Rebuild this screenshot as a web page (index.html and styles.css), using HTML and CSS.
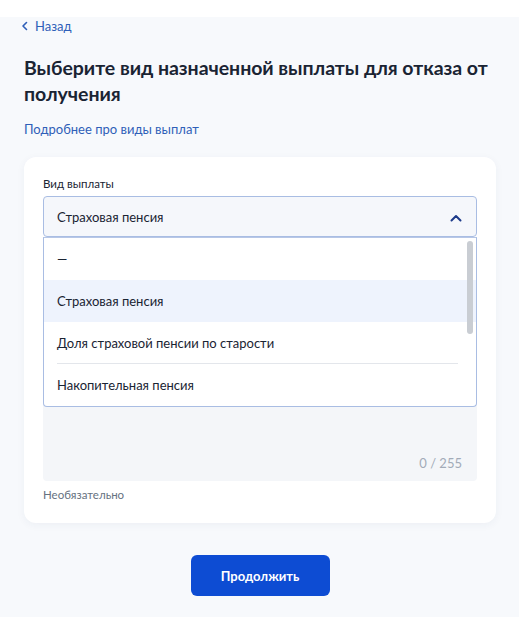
FILE: index.html
```html
<!DOCTYPE html>
<html lang="ru">
<head>
<meta charset="utf-8">
<title>Отказ от выплаты</title>
<link rel="stylesheet" href="styles.css">
</head>
<body>
<div class="topbar"></div>
<main class="page">
  <a class="back" href="#">
    <svg class="back-icon" width="8" height="10" viewBox="0 0 8 10"><polyline points="5.5,1.5 2,5 5.5,8.5" fill="none" stroke="#2f5fb8" stroke-width="1.6" stroke-linecap="round" stroke-linejoin="round"/></svg>
    <span>Назад</span>
  </a>
  <h1 class="title">Выберите вид назначенной выплаты для отказа от получения</h1>
  <a class="more" href="#">Подробнее про виды выплат</a>

  <section class="card">
    <div class="label">Вид выплаты</div>
    <div class="select-wrap">
      <div class="select">
        <span>Страховая пенсия</span>
        <svg class="chev" width="12" height="8" viewBox="0 0 12 8"><polyline points="1.5,6.5 6,2 10.5,6.5" fill="none" stroke="#1d3b8a" stroke-width="2" stroke-linecap="round" stroke-linejoin="round"/></svg>
      </div>
      <ul class="menu">
        <li class="item">—</li>
        <li class="item active">Страховая пенсия</li>
        <li class="item sep">Доля страховой пенсии по старости</li>
        <li class="item">Накопительная пенсия</li>
        <li class="scroll"></li>
      </ul>
    </div>

    <div class="textarea">
      <span class="counter">0 / 255</span>
    </div>
    <div class="hint">Необязательно</div>
  </section>

  <div class="actions">
    <button class="btn" type="button">Продолжить</button>
  </div>
</main>
</body>
</html>
```

FILE: styles.css
```css
* { box-sizing: border-box; }
html, body { margin: 0; padding: 0; }
body {
  background: #f7f9fc;
  font-family: Lato, "Noto Sans", sans-serif;
  color: #0b1f33;
  width: 519px;
  height: 617px;
  overflow: hidden;
}
.topbar { height: 17px; background: #ffffff; }
.page { padding: 0 23px 0 24px; }

.back {
  display: flex;
  align-items: center;
  gap: 6px;
  height: 18px;
  margin-left: -3px;
  color: #2f5fb8;
  font-size: 13px;
  text-decoration: none;
}
.back-icon { display: block; }

.title {
  margin: 20px 0 0;
  font-size: 19.5px;
  line-height: 26px;
  font-weight: 700;
  color: #1a2433;
  letter-spacing: -0.05px;
}
.more {
  display: block;
  margin-top: 13px;
  font-size: 13px;
  line-height: 18px;
  color: #2f5fb8;
  text-decoration: none;
}

.card {
  margin-top: 19px;
  background: #ffffff;
  border-radius: 12px;
  padding: 19px 19px 20px 19px;
  box-shadow: 0 2px 8px rgba(30, 50, 90, 0.05);
}
.label {
  font-size: 11.5px;
  line-height: 16px;
  color: #1a2433;
}
.select-wrap { position: relative; margin-top: 4px; }
.select {
  height: 41px;
  border: 1px solid #a9bde3;
  border-radius: 4px;
  background: #f5f7fb;
  display: flex;
  align-items: center;
  justify-content: space-between;
  padding: 0 14px 0 13px;
  font-size: 13px;
  color: #1a2433;
}
.chev { display: block; margin-top: 3px; }

.menu {
  position: absolute;
  top: 100%;
  left: 0;
  right: 0;
  margin: 0;
  padding: 0;
  list-style: none;
  background: #ffffff;
  border: 1px solid #a9bde3;
  border-top-color: #b7c7e6;
  border-radius: 0 0 4px 4px;
  z-index: 2;
}
.item {
  height: 42px;
  display: flex;
  align-items: center;
  padding-left: 13px;
  font-size: 13px;
  color: #1a2433;
  position: relative;
}
.item.active { background: #eef3fd; }
.item.sep::after {
  content: "";
  position: absolute;
  left: 13px;
  right: 18px;
  bottom: 0;
  height: 1px;
  background: #e3e6eb;
}
.scroll {
  position: absolute;
  top: 3px;
  right: 3px;
  width: 6px;
  height: 93px;
  border-radius: 3px;
  background: #c9cdd3;
}

.textarea {
  margin-top: 121px;
  height: 123px;
  background: #f4f6f9;
  border-radius: 4px;
  display: flex;
  align-items: flex-end;
  justify-content: flex-end;
  padding: 0 15px 10px 0;
}
.counter { font-size: 13px; line-height: 16px; color: #a2abb8; }
.hint {
  margin-top: 6px;
  font-size: 11.5px;
  line-height: 16px;
  color: #66727f;
}

.actions {
  display: flex;
  justify-content: center;
  margin-top: 32px;
}
.btn {
  width: 139px;
  height: 41px;
  border: 0;
  border-radius: 6px;
  background: #0d4cd3;
  color: #ffffff;
  font-family: Lato, "Noto Sans", sans-serif;
  font-size: 13px;
  font-weight: 700;
}
```
